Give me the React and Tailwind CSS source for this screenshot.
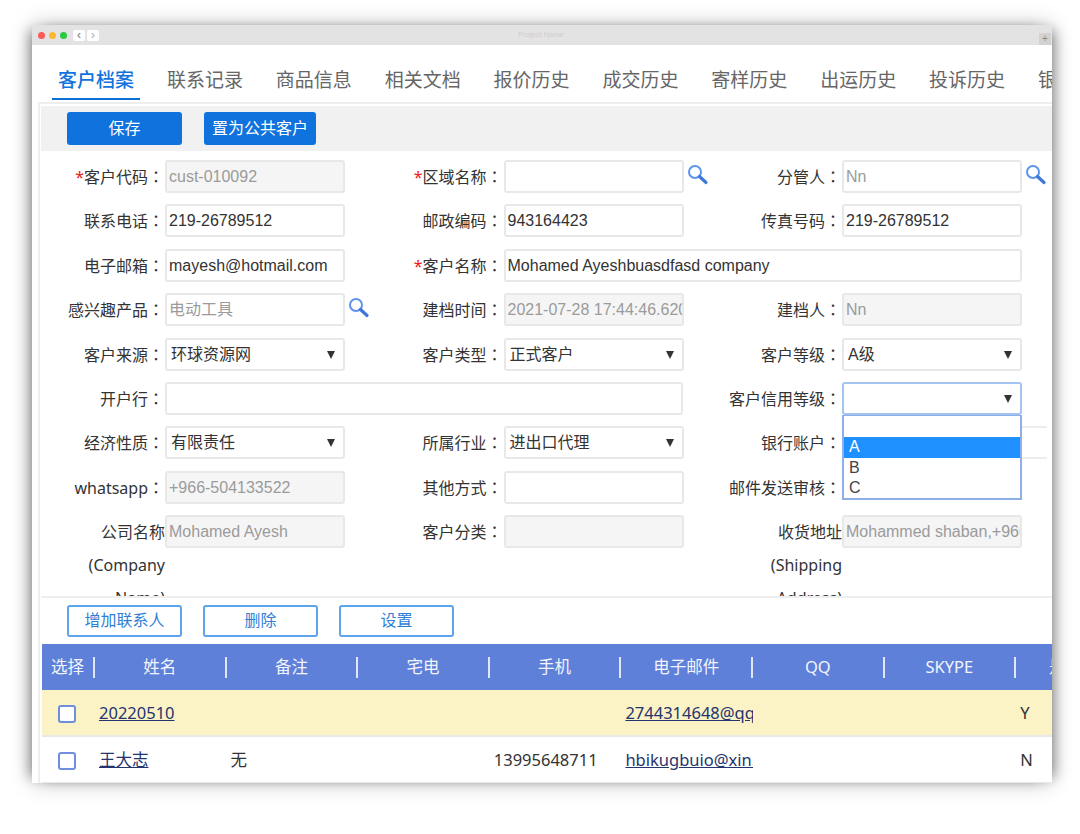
import React from 'react'

const SANS = "font-['Liberation_Sans','Noto_Sans_CJK_SC',sans-serif]"

const SearchIcon = () => (
  <svg className="absolute left-[183px] top-[4px] h-[22px] w-[22px]" viewBox="0 0 22 22" fill="none">
    <circle cx="8" cy="8" r="6" stroke="#5b93ee" strokeWidth="2" fill="#ffffff" />
    <path d="M12.5 12.5L19 18.5" stroke="#3f78d8" strokeWidth="3.2" strokeLinecap="round" />
  </svg>
)

const Label = ({ text, star, colon = true }) => (
  <div className={`w-[124px] shrink-0 pt-[1px] text-right font-['Noto_Sans','Noto_Sans_CJK_SC',sans-serif] text-[16px] leading-[33px] text-[#333333] ${colon ? 'h-[33px] pr-[1px]' : ''}`}>
    {star && <span className="text-[#f01818]">*</span>}
    {text}
    {colon && <span className="font-['Noto_Sans_CJK_TC',sans-serif] leading-none">：</span>}
  </div>
)

const Input = ({ value, disabled, width = 'w-[180px]', search, muted, open }) => (
  <div className={`relative shrink-0 ${width}`}>
    <div className={`h-[33px] overflow-hidden whitespace-nowrap rounded-[3px] border-2 pl-[2px] text-[16px] leading-[30px] ${open ? 'border-y-[#ececec] border-l-[#ececec] border-r-transparent' : 'border-[#e8e8e8]'} ${disabled ? 'bg-[#f5f5f5]' : 'bg-white'} ${disabled || muted ? 'text-[#9b9b9b]' : 'text-[#333333]'}`}>
      {value}
    </div>
    {search && <SearchIcon />}
  </div>
)

const Select = ({ value, focused }) => (
  <div className={`flex h-[33px] w-[180px] shrink-0 items-center justify-between rounded-[3px] border-2 bg-white pl-[4px] pr-[7px] pt-[1px] text-[16px] text-[#333333] ${focused ? 'border-[#a3c3f2]' : 'border-[#e8e8e8]'}`}>
    <span>{value}</span>
    <svg className="h-[10px] w-[10px]" viewBox="0 0 10 10"><path d="M1 1h8L5 9z" fill="#333333" /></svg>
  </div>
)

const Field = ({ span, children }) => (
  <div className={`flex items-start ${span ? 'col-span-2' : ''}`}>{children}</div>
)

const tabs = ['客户档案', '联系记录', '商品信息', '相关文档', '报价历史', '成交历史', '寄样历史', '出运历史', '投诉历史', '银行信息']
const columns = ['姓名', '备注', '宅电', '手机', '电子邮件', 'QQ', 'SKYPE', '是否主要']

const Cell = ({ children, link }) => (
  <div className={`w-[131.6px] shrink-0 overflow-hidden whitespace-nowrap pl-[4px] font-['Noto_Sans','Noto_Sans_CJK_SC',sans-serif] text-[16.5px] ${link ? 'text-[#24346e] underline' : 'text-[#333333]'}`}>
    {children}
  </div>
)

const Row = ({ bg, cells }) => (
  <div className={`flex h-[47px] w-[1150px] items-center border-b-2 border-[#e8e8e8] pt-[2px] ${bg}`}>
    <div className="flex w-[53px] shrink-0 items-center pl-[16px]">
      <span className="h-[18px] w-[18px] rounded-[3px] border-2 border-[#6f8ede] bg-white" />
    </div>
    {cells.map((c, i) => <Cell key={i} link={i === 0 || i === 4}>{c}</Cell>)}
  </div>
)

export default function App() {
  return (
    <div className={`h-[834px] w-[1080px] overflow-hidden bg-white pl-[32px] pt-[25px] ${SANS}`}>
      <div className="relative h-[758px] w-[1020px] overflow-hidden rounded-t-[3px] bg-white shadow-[0_0_22px_rgba(0,0,0,0.22),-8px_0_12px_-6px_rgba(0,0,0,0.4),8px_0_12px_-6px_rgba(0,0,0,0.4)]">
        {/* title bar */}
        <div className="relative flex h-[20px] items-center bg-[#e3e3e3] pl-[6px]">
          <span className="h-[7px] w-[7px] rounded-full bg-[#fc5b57]" />
          <span className="ml-[4px] h-[7px] w-[7px] rounded-full bg-[#fdb72f]" />
          <span className="ml-[4px] h-[7px] w-[7px] rounded-full bg-[#2bc840]" />
          <div className="ml-[6px] flex h-[11px] w-[12px] items-center justify-center rounded-[2px] bg-white text-[12px] leading-none text-[#777777]">‹</div>
          <div className="ml-[2px] flex h-[11px] w-[12px] items-center justify-center rounded-[2px] bg-white text-[12px] leading-none text-[#aaaaaa]">›</div>
          <div className="flex-1 pr-[56px] text-center text-[7.5px] text-[#cfcfcf]">Project Name</div>
          <div className="mr-px mt-[7px] flex h-[12px] w-[12px] items-center justify-center bg-[#d2d2d2] text-[10px] leading-none text-[#888888]">+</div>
        </div>

        {/* tabs */}
        <div className="flex h-[57px] gap-x-[20.9px] pl-[20px] pt-[22px]">
          {tabs.map((t, i) => (
            <div key={t} className={`h-[33px] w-[88px] shrink-0 pt-[1px] text-center text-[19px] leading-[26px] ${i === 0 ? 'border-b-[2px] border-[#0f6fd8] font-medium text-[#1273dc]' : 'text-[#666666]'}`}>
              {t}
            </div>
          ))}
        </div>

        <div className="ml-[6px] border-l-[2px] border-t-[2px] border-[#eeeeee] pl-[1px] pt-[2px]">
          {/* toolbar */}
          <div className="flex h-[45px] items-center gap-x-[22px] bg-[#f1f1f1] pl-[26px]">
            <button className="h-[33px] w-[115px] rounded-[3px] bg-[#0f72dd] pt-[1px] text-[16px] text-white">保存</button>
            <button className="h-[33px] w-[112px] rounded-[3px] bg-[#0f72dd] pt-[1px] text-[16px] text-white">置为公共客户</button>
          </div>

          {/* form */}
          <div className="grid h-[447px] grid-cols-[338.5px_338.5px_338.5px] content-start gap-y-[11.4px] overflow-hidden border-b-2 border-[#eeeeee] pt-[9px]">
            <Field><Label text="客户代码" star /><Input value="cust-010092" disabled /></Field>
            <Field><Label text="区域名称" star /><Input search /></Field>
            <Field><Label text="分管人" /><Input value="Nn" muted search /></Field>

            <Field><Label text="联系电话" /><Input value="219-26789512" /></Field>
            <Field><Label text="邮政编码" /><Input value="943164423" /></Field>
            <Field><Label text="传真号码" /><Input value="219-26789512" /></Field>

            <Field><Label text="电子邮箱" /><Input value="mayesh@hotmail.com" /></Field>
            <Field span><Label text="客户名称" star /><Input value="Mohamed Ayeshbuasdfasd company" width="w-[518px]" /></Field>

            <Field><Label text="感兴趣产品" /><Input value="电动工具" muted search /></Field>
            <Field><Label text="建档时间" /><Input value="2021-07-28 17:44:46.620" disabled /></Field>
            <Field><Label text="建档人" /><Input value="Nn" disabled /></Field>

            <Field><Label text="客户来源" /><Select value="环球资源网" /></Field>
            <Field><Label text="客户类型" /><Select value="正式客户" /></Field>
            <Field><Label text="客户等级" /><Select value="A级" /></Field>

            <Field span><Label text="开户行" /><Input width="w-[518px]" /></Field>
            <Field><Label text="客户信用等级" /><Select focused /></Field>

            <Field><Label text="经济性质" /><Select value="有限责任" /></Field>
            <Field><Label text="所属行业" /><Select value="进出口代理" /></Field>
            <Field><Label text="银行账户" /><Input width="w-[206px]" open /></Field>

            <Field><Label text="whatsapp" /><Input value="+966-504133522" disabled /></Field>
            <Field><Label text="其他方式" /><Input /></Field>
            <Field><Label text="邮件发送审核" /></Field>

            <Field><Label text="公司名称 (Company Name)" colon={false} /><Input value="Mohamed Ayesh" disabled /></Field>
            <Field><Label text="客户分类" /><Input disabled /></Field>
            <Field><Label text="收货地址 (Shipping Address)" colon={false} /><Input value="Mohammed shaban,+966" disabled /></Field>
          </div>

          {/* contact buttons */}
          <div className="flex h-[46px] items-start gap-x-[21px] pl-[26px] pt-[7px]">
            {['增加联系人', '删除', '设置'].map((b) => (
              <button key={b} className="h-[32px] w-[115px] rounded-[3px] border-2 border-[#5ea4ec] bg-white text-[16px] text-[#2f7fd6]">{b}</button>
            ))}
          </div>

          {/* contacts table */}
          <div className="ml-px overflow-hidden">
            <div className="flex h-[46px] w-[1150px] items-center bg-[#5f80d8] font-['Noto_Sans','Noto_Sans_CJK_SC',sans-serif] text-[16.5px] text-[#f2f5fd]">
              <div className="flex h-[21px] w-[53px] shrink-0 items-center justify-center border-r-2 border-[#dfe6f8]">选择</div>
              {columns.map((c) => (
                <div key={c} className="flex h-[21px] w-[131.6px] shrink-0 items-center justify-center border-r-2 border-[#dfe6f8] last:border-r-0">{c}</div>
              ))}
            </div>
            <Row bg="bg-[#fbf2c6]" cells={['20220510', '', '', '', '2744314648@qq.com', '', '', 'Y']} />
            <Row bg="bg-white" cells={['王大志', '无', '', '13995648711', 'hbikugbuio@xin.com', '', '', 'N']} />
          </div>
        </div>

        {/* open select list */}
        <div className="absolute left-[810px] top-[390px] h-[85px] w-[180px] border-2 border-t border-[#8fb0e6] bg-white text-[16px] leading-[20.5px] text-[#444444]">
          <div className="h-[21px]" />
          <div className="bg-[#1e90ff] pl-[5px] text-white">A</div>
          <div className="pl-[5px]">B</div>
          <div className="pl-[5px]">C</div>
        </div>
      </div>
    </div>
  )
}
